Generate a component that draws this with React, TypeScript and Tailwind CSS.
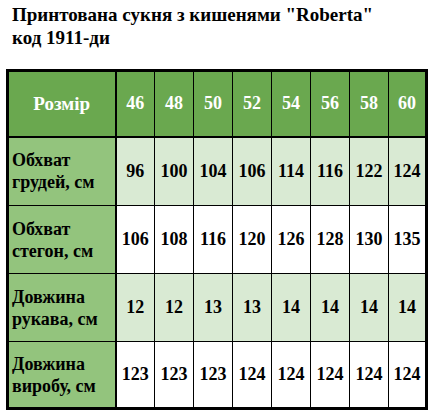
import React from 'react';

const sizes = ['46', '48', '50', '52', '54', '56', '58', '60'];

const rows = [
  { label: ['Обхват', 'грудей, см'], values: ['96', '100', '104', '106', '114', '116', '122', '124'], tint: true, h: 'h-[69px]' },
  { label: ['Обхват', 'стегон, см'], values: ['106', '108', '116', '120', '126', '128', '130', '135'], tint: false, h: 'h-[68px]' },
  { label: ['Довжина', 'рукава, см'], values: ['12', '12', '13', '13', '14', '14', '14', '14'], tint: true, h: 'h-[68px]' },
  { label: ['Довжина', 'виробу, см'], values: ['123', '123', '123', '124', '124', '124', '124', '124'], tint: false, h: 'h-[67px]' },
];

export default function App() {
  return (
    <div className="w-[434px] h-[417px] bg-white text-black font-['Liberation_Serif'] font-bold">
      <h1 className="pl-[12px] pt-[3px] text-[19px] leading-[23px]">
        Принтована сукня з кишенями "Roberta"
        <br />
        код 1911-ди
      </h1>

      <table className="ml-[6px] mt-[20px] w-[422px] table-fixed border-collapse border-[3px] border-black">
        <colgroup>
          <col className="w-[108px]" />
          {sizes.map((s, i) => (
            <col key={s} className={i === 7 ? 'w-[38px]' : 'w-[39px]'} />
          ))}
        </colgroup>
        <thead>
          <tr className="h-[66px] bg-[#6aa84f] text-white text-[18px]">
            <th className="border-b-2 border-r-2 border-black text-center text-[19px]">Розмір</th>
            {sizes.map((s) => (
              <th key={s} className="border-b-2 border-l border-black text-center">
                {s}
              </th>
            ))}
          </tr>
        </thead>
        <tbody>
          {rows.map((row, ri) => (
            <tr key={ri} className={row.h}>
              <td className="bg-[#93c47d] border-r-2 border-t border-black pl-[3px] text-[18px] leading-[22px] text-left">
                {row.label[0]}
                <br />
                {row.label[1]}
              </td>
              {row.values.map((v, ci) => (
                <td
                  key={ci}
                  className={`${row.tint ? 'bg-[#d9ead3]' : 'bg-white'} border border-black text-center text-[18px] p-0`}
                >
                  {v}
                </td>
              ))}
            </tr>
          ))}
        </tbody>
      </table>
    </div>
  );
}
